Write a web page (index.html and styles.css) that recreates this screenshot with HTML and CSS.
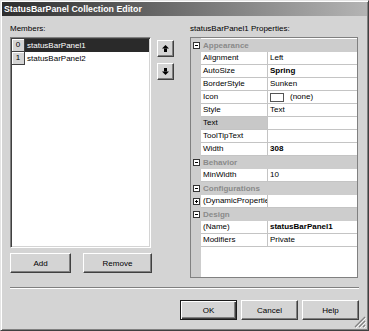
FILE: index.html
```html
<!DOCTYPE html>
<html>
<head>
<meta charset="utf-8">
<title>StatusBarPanel Collection Editor</title>
<link rel="stylesheet" href="styles.css">
</head>
<body>
<div class="window">
  <div class="titlebar">StatusBarPanel Collection Editor</div>
  <div class="content">
    <div class="main">
      <div class="left">
        <div class="label">Members:</div>
        <div class="listrow">
          <div class="list">
            <div class="item selected"><span class="idx">0</span><span class="itext">statusBarPanel1</span></div>
            <div class="item"><span class="idx">1</span><span class="itext">statusBarPanel2</span></div>
          </div>
          <div class="arrows">
            <div class="btn arrow"><svg width="7" height="7" viewBox="0 0 7 7"><path d="M3.5 0 L7 3.5 L0 3.5 Z" fill="#000"/><rect x="2" y="3.5" width="3" height="3.5" fill="#000"/></svg></div>
            <div class="btn arrow"><svg width="7" height="7" viewBox="0 0 7 7"><rect x="2" y="0" width="3" height="3.5" fill="#000"/><path d="M0 3.5 L7 3.5 L3.5 7 Z" fill="#000"/></svg></div>
          </div>
        </div>
        <div class="lbuttons">
          <div class="btn add">Add</div>
          <div class="btn remove">Remove</div>
        </div>
      </div>
      <div class="right">
        <div class="label">statusBarPanel1 Properties:</div>
        <div class="grid">
          <div class="row cat"><span class="tog"><span class="box minus"></span></span><span class="catname">Appearance</span></div>
          <div class="row"><span class="tog"></span><span class="pname">Alignment</span><span class="pval">Left</span></div>
          <div class="row"><span class="tog"></span><span class="pname">AutoSize</span><span class="pval bold">Spring</span></div>
          <div class="row"><span class="tog"></span><span class="pname">BorderStyle</span><span class="pval">Sunken</span></div>
          <div class="row"><span class="tog"></span><span class="pname">Icon</span><span class="pval"><span class="swatch"></span>(none)</span></div>
          <div class="row"><span class="tog"></span><span class="pname">Style</span><span class="pval">Text</span></div>
          <div class="row"><span class="tog"></span><span class="pname sel">Text</span><span class="pval"></span></div>
          <div class="row"><span class="tog"></span><span class="pname">ToolTipText</span><span class="pval"></span></div>
          <div class="row"><span class="tog"></span><span class="pname">Width</span><span class="pval bold">308</span></div>
          <div class="row cat"><span class="tog"><span class="box minus"></span></span><span class="catname">Behavior</span></div>
          <div class="row"><span class="tog"></span><span class="pname">MinWidth</span><span class="pval">10</span></div>
          <div class="row cat"><span class="tog"><span class="box minus"></span></span><span class="catname">Configurations</span></div>
          <div class="row"><span class="tog"><span class="box plus"></span></span><span class="pname">(DynamicProperties)</span><span class="pval"></span></div>
          <div class="row cat"><span class="tog"><span class="box minus"></span></span><span class="catname">Design</span></div>
          <div class="row"><span class="tog"></span><span class="pname">(Name)</span><span class="pval bold">statusBarPanel1</span></div>
          <div class="row"><span class="tog"></span><span class="pname">Modifiers</span><span class="pval">Private</span></div>
        </div>
      </div>
    </div>
    <div class="sep"></div>
    <div class="footer">
      <div class="btn fbtn default">OK</div>
      <div class="btn fbtn">Cancel</div>
      <div class="btn fbtn">Help</div>
    </div>
  </div>
  <div class="grip"><svg width="12" height="12" viewBox="0 0 12 12"><path d="M11 1 L1 11 M11 5 L5 11 M11 9 L9 11" stroke="#808080" stroke-width="1.2"/><path d="M12 2 L2 12 M12 6 L6 12 M12 10 L10 12" stroke="#fff" stroke-width="0.8"/></svg></div>
</div>
</body>
</html>
```

FILE: styles.css
```css
html, body {
  margin: 0;
  padding: 0;
  background: #d4d4d4;
}

body {
  font-family: "Liberation Sans", Arial, sans-serif;
  font-size: 8px;
  color: #000;
}

.window {
  position: relative;
  width: 369px;
  height: 331px;
  box-sizing: border-box;
  background: #d4d4d4;
  border: 1px solid;
  border-color: #e4e4e4 #404040 #404040 #e4e4e4;
  box-shadow: inset 1px 1px 0 #fff, inset -1px -1px 0 #808080;
  padding: 1px;
}

.titlebar {
  height: 14px;
  line-height: 14px;
  padding-left: 2px;
  color: #fff;
  font-weight: bold;
  font-size: 8.8px;
  background: linear-gradient(to right, #2e2e2e 0%, #6a6a6a 45%, #b4b4b4 100%);
  white-space: nowrap;
}

.content {
  padding: 0 8px 0 8px;
}

.main {
  display: flex;
  align-items: flex-start;
}

.left {
  width: 165px;
}

.right {
  width: 168px;
  margin-left: 15px;
}

.label {
  margin-top: 8px;
  height: 10px;
  line-height: 10px;
  white-space: nowrap;
}

.listrow {
  display: flex;
  margin-top: 3px;
}

.list {
  width: 141px;
  height: 211px;
  box-sizing: border-box;
  background: #fff;
  border: 1px solid;
  border-color: #808080 #fff #fff #808080;
  box-shadow: inset 1px 1px 0 #404040, inset -1px -1px 0 #d4d4d4;
  padding: 1px;
}

.item {
  display: flex;
  height: 13px;
  line-height: 13px;
}

.idx {
  width: 13px;
  box-sizing: border-box;
  text-align: center;
  background: #d4d4d4;
  border-right: 1px solid #404040;
  border-bottom: 1px solid #404040;
  box-shadow: inset 1px 1px 0 #fff;
  line-height: 12px;
}

.itext {
  flex: 1;
  padding-left: 2px;
}

.item.selected .itext {
  background: #2a2a2a;
  color: #fff;
}

.btn {
  box-sizing: border-box;
  background: #d4d4d4;
  border: 1px solid;
  border-color: #fff #404040 #404040 #fff;
  box-shadow: inset -1px -1px 0 #808080;
  display: flex;
  align-items: center;
  justify-content: center;
  white-space: nowrap;
}

.arrows {
  display: flex;
  flex-direction: column;
  gap: 6px;
  margin-left: 6px;
  padding-top: 3px;
}

.arrow {
  width: 17px;
  height: 17px;
}

.lbuttons {
  display: flex;
  margin-top: 5px;
}

.add {
  width: 61px;
  height: 20px;
}

.remove {
  width: 69px;
  height: 20px;
  margin-left: 12px;
}

.grid {
  margin-top: 3px;
  height: 241px;
  box-sizing: border-box;
  border: 1px solid #808080;
  padding-top: 1px;
  background: linear-gradient(to right, #cdcdcd 10px, #fff 10px);
  overflow: hidden;
}

.row {
  display: flex;
  height: 13px;
  line-height: 12px;
}

.row.cat {
  background: #cdcdcd;
  line-height: 13px;
}

.tog {
  width: 10px;
  flex: none;
  display: flex;
  align-items: center;
  justify-content: center;
}

.box {
  position: relative;
  width: 7px;
  height: 7px;
  box-sizing: border-box;
  border: 1px solid #333;
  background: #fff;
}

.box::before {
  content: "";
  position: absolute;
  left: 1px;
  top: 2px;
  width: 3px;
  height: 1px;
  background: #000;
}

.box.plus::after {
  content: "";
  position: absolute;
  left: 2px;
  top: 1px;
  width: 1px;
  height: 3px;
  background: #000;
}

.catname {
  padding-left: 2px;
  font-weight: bold;
  color: #8a8a8a;
  white-space: nowrap;
}

.pname {
  width: 67px;
  flex: none;
  box-sizing: border-box;
  padding-left: 2px;
  border-right: 1px solid #c4c4c4;
  border-bottom: 1px solid #c4c4c4;
  overflow: hidden;
  white-space: nowrap;
  background: #fff;
}

.pname.sel {
  background: #c8c8c8;
}

.pval {
  flex: 1;
  padding-left: 2px;
  border-bottom: 1px solid #c4c4c4;
  background: #fff;
  white-space: nowrap;
  overflow: hidden;
  display: flex;
  align-items: center;
}

.bold {
  font-weight: bold;
}

.swatch {
  display: inline-block;
  width: 14px;
  height: 9px;
  box-sizing: border-box;
  border: 1px solid #555;
  background: #fff;
  margin-right: 6px;
}

.sep {
  margin-top: 9px;
  height: 0;
  border-top: 1px solid #808080;
  border-bottom: 1px solid #fff;
}

.footer {
  display: flex;
  justify-content: flex-end;
  gap: 4px;
  margin-top: 11px;
}

.fbtn {
  width: 57px;
  height: 20px;
}

.fbtn.default {
  border: 1px solid #1a1a1a;
  box-shadow: inset 1px 1px 0 #fff, inset -1px -1px 0 #404040, inset -2px -2px 0 #808080;
}

.grip {
  position: absolute;
  right: 2px;
  bottom: 2px;
  width: 12px;
  height: 12px;
}
```
